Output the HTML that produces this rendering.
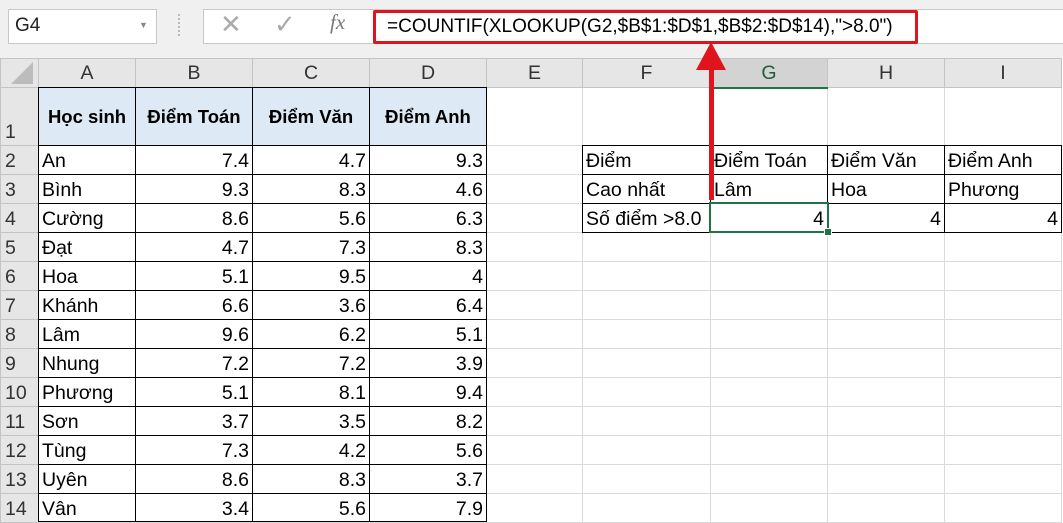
<!DOCTYPE html>
<html><head><meta charset="utf-8"><style>
body{margin:0;width:1063px;height:523px;overflow:hidden;background:#fff;font-family:"Liberation Sans",Calibri,sans-serif;position:relative}
.top{position:absolute;left:0;top:0;width:1063px;height:58px;background:#f0f0f0}
.box{position:absolute;background:#fff;border:1px solid #c8c8c8}
table{position:absolute;left:0;top:58px;border-collapse:collapse;table-layout:fixed}
td{border:1px solid #dadada;padding:0 3px 2px 3px;font-size:19.5px;height:26px;vertical-align:bottom;white-space:nowrap;overflow:hidden;color:#000;line-height:22px}
tr.h td{background:#e6e6e6;border-color:#c4c4c4;text-align:center;vertical-align:middle;color:#333;font-size:19.5px;padding:0}
td.rh{background:#e6e6e6;border-color:#c4c4c4;color:#333;text-align:left;padding-left:4px;font-size:19.5px}
td.r{text-align:right}
td.hd{background:#dde9f5;font-weight:bold;text-align:center;vertical-align:middle;font-size:18.5px;padding:0}
.l{position:absolute;background:#000}
</style></head><body>
<div class="top"></div>
<div class="box" style="left:8px;top:9px;width:147px;height:33px"><span style="position:absolute;left:6px;top:5px;font-size:19px;color:#222">G4</span><span style="position:absolute;left:130px;top:10px;font-size:9px;color:#888">▼</span></div>
<div style="position:absolute;left:178px;top:14px;width:2px;height:22px;border-left:2px dotted #bbb"></div>
<div class="box" style="left:203px;top:9px;width:860px;height:33px;border-right:none"></div>
<span style="position:absolute;left:220px;top:9px;font-size:26px;color:#aaa">✕</span>
<span style="position:absolute;left:274px;top:9px;font-size:26px;color:#aaa">✓</span>
<span style="position:absolute;left:330px;top:10px;font-size:21px;color:#777;font-family:'Liberation Serif',serif;font-style:italic">fx</span>
<div style="position:absolute;left:373px;top:10px;width:539px;height:28px;border:3px solid #e0141c;border-radius:2px"></div>
<span style="position:absolute;left:387px;top:16px;font-size:19px;color:#000">=COUNTIF(XLOOKUP(G2,$B$1:$D$1,$B$2:$D$14),"&gt;8.0")</span>
<table>
<colgroup><col style="width:38px"><col style="width:97px"><col style="width:117px"><col style="width:117px"><col style="width:117px"><col style="width:96px"><col style="width:128px"><col style="width:117px"><col style="width:117px"><col style="width:117px"></colgroup>
<tr class="h" style="height:29px"><td style="background:#e6e6e6;height:28px"><div style="width:0;height:0;border-left:22px solid transparent;border-bottom:22px solid #bcbcbc;margin-left:10px"></div></td><td>A</td><td>B</td><td>C</td><td>D</td><td>E</td><td>F</td><td style="background:#d3d3d3;border-bottom:2px solid #217346;color:#1e5e3a">G</td><td>H</td><td>I</td></tr>
<tr style="height:58px"><td class="rh" style="height:55px">1</td><td class="hd">Học sinh</td><td class="hd">Điểm Toán</td><td class="hd">Điểm Văn</td><td class="hd">Điểm Anh</td><td></td><td></td><td></td><td></td><td></td></tr>
<tr><td class="rh">2</td><td>An</td><td class="r">7.4</td><td class="r">4.7</td><td class="r">9.3</td><td></td><td>Điểm</td><td>Điểm Toán</td><td>Điểm Văn</td><td>Điểm Anh</td></tr>
<tr><td class="rh">3</td><td>Bình</td><td class="r">9.3</td><td class="r">8.3</td><td class="r">4.6</td><td></td><td>Cao nhất</td><td>Lâm</td><td>Hoa</td><td>Phương</td></tr>
<tr><td class="rh">4</td><td>Cường</td><td class="r">8.6</td><td class="r">5.6</td><td class="r">6.3</td><td></td><td>Số điểm &gt;8.0</td><td class="r">4</td><td class="r">4</td><td class="r">4</td></tr>
<tr><td class="rh">5</td><td>Đạt</td><td class="r">4.7</td><td class="r">7.3</td><td class="r">8.3</td><td></td><td></td><td></td><td></td><td></td></tr>
<tr><td class="rh">6</td><td>Hoa</td><td class="r">5.1</td><td class="r">9.5</td><td class="r">4</td><td></td><td></td><td></td><td></td><td></td></tr>
<tr><td class="rh">7</td><td>Khánh</td><td class="r">6.6</td><td class="r">3.6</td><td class="r">6.4</td><td></td><td></td><td></td><td></td><td></td></tr>
<tr><td class="rh">8</td><td>Lâm</td><td class="r">9.6</td><td class="r">6.2</td><td class="r">5.1</td><td></td><td></td><td></td><td></td><td></td></tr>
<tr><td class="rh">9</td><td>Nhung</td><td class="r">7.2</td><td class="r">7.2</td><td class="r">3.9</td><td></td><td></td><td></td><td></td><td></td></tr>
<tr><td class="rh">10</td><td>Phương</td><td class="r">5.1</td><td class="r">8.1</td><td class="r">9.4</td><td></td><td></td><td></td><td></td><td></td></tr>
<tr><td class="rh">11</td><td>Sơn</td><td class="r">3.7</td><td class="r">3.5</td><td class="r">8.2</td><td></td><td></td><td></td><td></td><td></td></tr>
<tr><td class="rh">12</td><td>Tùng</td><td class="r">7.3</td><td class="r">4.2</td><td class="r">5.6</td><td></td><td></td><td></td><td></td><td></td></tr>
<tr><td class="rh">13</td><td>Uyên</td><td class="r">8.6</td><td class="r">8.3</td><td class="r">3.7</td><td></td><td></td><td></td><td></td><td></td></tr>
<tr><td class="rh">14</td><td>Vân</td><td class="r">3.4</td><td class="r">5.6</td><td class="r">7.9</td><td></td><td></td><td></td><td></td><td></td></tr>
</table>
<div class="l" style="left:38px;top:87px;width:1px;height:435px"></div>
<div class="l" style="left:135px;top:87px;width:1px;height:435px"></div>
<div class="l" style="left:252px;top:87px;width:1px;height:435px"></div>
<div class="l" style="left:369px;top:87px;width:1px;height:435px"></div>
<div class="l" style="left:486px;top:87px;width:1px;height:435px"></div>
<div class="l" style="left:38px;top:87px;width:449px;height:1px"></div>
<div class="l" style="left:38px;top:145px;width:449px;height:1px"></div>
<div class="l" style="left:38px;top:174px;width:449px;height:1px"></div>
<div class="l" style="left:38px;top:203px;width:449px;height:1px"></div>
<div class="l" style="left:38px;top:232px;width:449px;height:1px"></div>
<div class="l" style="left:38px;top:261px;width:449px;height:1px"></div>
<div class="l" style="left:38px;top:290px;width:449px;height:1px"></div>
<div class="l" style="left:38px;top:319px;width:449px;height:1px"></div>
<div class="l" style="left:38px;top:348px;width:449px;height:1px"></div>
<div class="l" style="left:38px;top:377px;width:449px;height:1px"></div>
<div class="l" style="left:38px;top:406px;width:449px;height:1px"></div>
<div class="l" style="left:38px;top:435px;width:449px;height:1px"></div>
<div class="l" style="left:38px;top:464px;width:449px;height:1px"></div>
<div class="l" style="left:38px;top:493px;width:449px;height:1px"></div>
<div class="l" style="left:38px;top:521px;width:449px;height:1px"></div>
<div class="l" style="left:582px;top:145px;width:1px;height:88px"></div>
<div class="l" style="left:710px;top:145px;width:1px;height:88px"></div>
<div class="l" style="left:827px;top:145px;width:1px;height:88px"></div>
<div class="l" style="left:944px;top:145px;width:1px;height:88px"></div>
<div class="l" style="left:1061px;top:145px;width:1px;height:88px"></div>
<div class="l" style="left:582px;top:145px;width:480px;height:1px"></div>
<div class="l" style="left:582px;top:174px;width:480px;height:1px"></div>
<div class="l" style="left:582px;top:203px;width:480px;height:1px"></div>
<div class="l" style="left:582px;top:232px;width:480px;height:1px"></div>
<div style="position:absolute;left:709px;top:202px;width:116px;height:27px;border:2px solid #217346"></div>
<div style="position:absolute;left:824px;top:228px;width:6px;height:6px;background:#217346;border:1px solid #fff"></div>
<div style="position:absolute;left:709px;top:66px;width:5px;height:134px;background:#e0141c"></div>
<div style="position:absolute;left:696px;top:42px;width:0;height:0;border-left:15px solid transparent;border-right:15px solid transparent;border-bottom:28px solid #e0141c"></div>
</body></html>
